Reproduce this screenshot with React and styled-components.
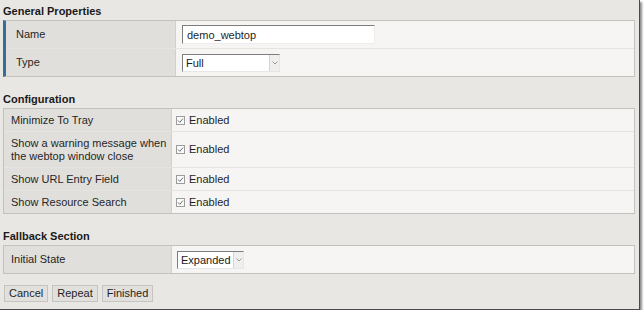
import styled, { createGlobalStyle } from "styled-components";

const GlobalStyle = createGlobalStyle`
  html, body {
    margin: 0;
    padding: 0;
    background: #ffffff;
  }
  body {
    font-family: "Liberation Sans", Arial, sans-serif;
    font-size: 11px;
    color: #262626;
  }
`;

const Window = styled.div`
  box-sizing: border-box;
  width: 640px;
  height: 310px;
  padding: 0 4px 0 3px;
  background: #e9e7e3;
  border-right: 1px solid #4a4a4a;
  border-bottom: 1px solid #4a4a4a;
  box-shadow: 2px 2px 2px rgba(0, 0, 0, 0.45);
  display: flex;
  flex-direction: column;
`;

const SectionTitle = styled.div`
  box-sizing: border-box;
  height: 20px;
  padding-top: 5px;
  margin-top: ${(p) => (p.$first ? "0" : "11px")};
  line-height: 12px;
  font-weight: bold;
  color: #1a1a1a;
`;

const Table = styled.div`
  display: flex;
  flex-direction: column;
  border: 1px solid #c4c2be;
  border-left: ${(p) => (p.$accent ? "3px solid #3a6b9c" : "1px solid #c4c2be")};
  background: #f6f5f3;
`;

const Row = styled.div`
  display: flex;
  min-height: ${(p) => p.$height}px;
  & + & {
    border-top: 1px solid #e6e4e0;
  }
`;

const Label = styled.div`
  box-sizing: border-box;
  flex: 0 0 ${(p) => p.$width}px;
  display: flex;
  align-items: center;
  padding: 4px 1px 4px ${(p) => p.$indent}px;
  line-height: 13px;
  background: #e1dfdb;
  border-right: 1px solid #d2d0cc;
`;

const Value = styled.div`
  flex: 1;
  display: flex;
  align-items: center;
  padding-left: ${(p) => p.$indent}px;
`;

const TextInput = styled.input`
  box-sizing: border-box;
  width: 193px;
  height: 19px;
  padding: 0 4px;
  margin: 0;
  border: 1px solid;
  border-color: #7d7d7d #ededed #ededed #7d7d7d;
  background: #ffffff;
  font-family: inherit;
  font-size: 11px;
  color: #1f1f1f;
  outline: none;
`;

const Select = styled.div`
  box-sizing: border-box;
  width: ${(p) => p.$width}px;
  height: 18px;
  display: flex;
  align-items: center;
  border: 1px solid;
  border-color: #7d7d7d #e6e6e6 #e6e6e6 #7d7d7d;
  background: #ffffff;
  color: #1a1a1a;
`;

const SelectText = styled.span`
  flex: 1;
  padding-left: 3px;
  line-height: 14px;
`;

const SelectArrow = styled.span`
  box-sizing: border-box;
  width: 10px;
  height: 16px;
  display: flex;
  align-items: center;
  justify-content: center;
  background: #efefef;
  border-left: 1px solid #d4d4d4;
`;

const Check = styled.span`
  display: inline-flex;
  align-items: center;
  gap: 4px;
  line-height: 13px;
  color: #1f1f1f;
`;

const Box = styled.svg`
  display: block;
  width: 9px;
  height: 9px;
`;

const Buttons = styled.div`
  display: flex;
  gap: 4px;
  margin: 11px 0 0 1px;
`;

const Button = styled.button`
  box-sizing: border-box;
  height: 17px;
  padding: 0 4px;
  border: 1px solid #c6c4c0;
  background: #e2e0dc;
  font-family: inherit;
  font-size: 11px;
  color: #1f1f1f;
  line-height: 15px;
`;

function Chevron() {
  return (
    <svg width="6" height="4" viewBox="0 0 6 4">
      <polyline points="0.5,0.5 3,3 5.5,0.5" fill="none" stroke="#9a9a9a" strokeWidth="1" />
    </svg>
  );
}

function Dropdown({ width, value }) {
  return (
    <Select $width={width}>
      <SelectText>{value}</SelectText>
      <SelectArrow>
        <Chevron />
      </SelectArrow>
    </Select>
  );
}

function Enabled() {
  return (
    <Check>
      <Box viewBox="0 0 9 9">
        <rect x="0.5" y="0.5" width="8" height="8" fill="#fafafa" stroke="#9c9c9c" />
        <polyline points="2,4.5 3.8,6.3 7,2.6" fill="none" stroke="#6f6f6f" strokeWidth="1" />
      </Box>
      Enabled
    </Check>
  );
}

const config = [
  { label: "Minimize To Tray", height: 22 },
  { label: "Show a warning message when the webtop window close", height: 35 },
  { label: "Show URL Entry Field", height: 22 },
  { label: "Show Resource Search", height: 22 },
];

export default function App() {
  return (
    <>
      <GlobalStyle />
      <Window>
        <SectionTitle $first>General Properties</SectionTitle>
        <Table $accent>
          <Row $height={27}>
            <Label $width={170} $indent={10}>Name</Label>
            <Value $indent={6}>
              <TextInput defaultValue="demo_webtop" />
            </Value>
          </Row>
          <Row $height={27}>
            <Label $width={170} $indent={10}>Type</Label>
            <Value $indent={6}>
              <Dropdown width={98} value="Full" />
            </Value>
          </Row>
        </Table>

        <SectionTitle>Configuration</SectionTitle>
        <Table>
          {config.map((item) => (
            <Row key={item.label} $height={item.height}>
              <Label $width={168} $indent={7}>{item.label}</Label>
              <Value $indent={4}>
                <Enabled />
              </Value>
            </Row>
          ))}
        </Table>

        <SectionTitle>Fallback Section</SectionTitle>
        <Table>
          <Row $height={27}>
            <Label $width={168} $indent={7}>Initial State</Label>
            <Value $indent={5}>
              <Dropdown width={67} value="Expanded" />
            </Value>
          </Row>
        </Table>

        <Buttons>
          <Button>Cancel</Button>
          <Button>Repeat</Button>
          <Button>Finished</Button>
        </Buttons>
      </Window>
    </>
  );
}
